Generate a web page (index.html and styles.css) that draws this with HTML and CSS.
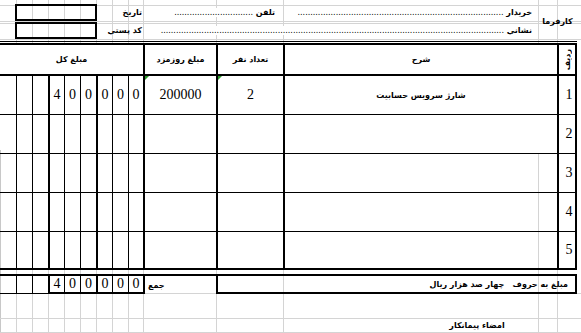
FILE: index.html
```html
<!DOCTYPE html>
<html lang="fa" dir="rtl">
<head>
    <meta charset="UTF-8">
    <meta name="viewport" content="width=device-width, initial-scale=1.0">
    <title>صورت حساب روزمزد</title>
    <link rel="stylesheet" href="styles.css">
</head>
<body>
    <div class="sheet">
        <div class="head">
            <div class="employer">کارفرما</div>
            <div class="field buyer"><span class="ink">خريدار <span class="dots">.................................................................................</span></span></div>
            <div class="field phone"><span class="ink">تلفن <span class="dots">...............................</span></span></div>
            <div class="label">تاريخ</div>
            <div class="box"></div>
            <div class="field address"><span class="ink">نشاني <span class="dots">.......................................................................................................................................</span></span></div>
            <div class="label">کد پستي</div>
            <div class="box"></div>
        </div>

        <div class="rule"></div>

        <div class="grid" id="grid">
            <div class="th thick row-head"><span>رديف</span></div>
            <div class="th thick">شرح</div>
            <div class="th thick">تعداد نفر</div>
            <div class="th thick">مبلغ روزمزد</div>
            <div class="th total-head">مبلغ کل</div>
        </div>

        <div class="total" id="total">
            <div class="words">مبلغ به حروف   چهار صد هزار ريال</div>
            <div class="sum-label">جمع</div>
        </div>

        <div class="sign">
            <div class="sign-text">امضاء پيمانکار</div>
        </div>
    </div>

    <script>
        // border of each column, right to left
        const edges = ['thick', 'thick', 'thick', 'thick', 'thin', 'thin', 'thick', 'thin', 'thin', 'thick', 'thin', 'thin', 'none'];

        const items = [
            { desc: 'شارژ سرويس حسابيت', count: '2', rate: '200000', total: '400000' },
            {}, {}, {}, {}
        ];

        // one digit per cell, units in the rightmost cell
        function digitCells(value) {
            return (value || '').padStart(9, ' ').split('').reverse();
        }

        function buildRows() {
            const grid = document.getElementById('grid');
            items.forEach((item, index) => {
                const values = [String(index + 1), item.desc || '', item.count || '', item.rate || ''].concat(digitCells(item.total));
                values.forEach((value, col) => {
                    const cell = document.createElement('div');
                    cell.className = 'cell ' + edges[col];
                    if (col === 0) cell.classList.add('num');
                    if (col === 1) cell.classList.add(index < 2 ? 'desc' : 'desc-open');
                    if (col === 2 || col === 3) {
                        cell.classList.add('val');
                        if (value) cell.classList.add('flag');
                    }
                    if (col > 3) cell.classList.add('digit');
                    cell.textContent = value.trim();
                    grid.appendChild(cell);
                });
            });
        }

        function buildTotal() {
            const total = document.getElementById('total');
            digitCells('400000').forEach((value, col) => {
                const cell = document.createElement('div');
                cell.className = 'sum-digit ' + edges[col + 4] + (col < 6 ? ' boxed' : '');
                cell.textContent = value.trim();
                total.appendChild(cell);
            });
        }

        window.onload = function() {
            buildRows();
            buildTotal();
        };
    </script>
</body>
</html>
```

FILE: styles.css
```css
body {
    margin: 0;
    background-color: #ffffff;
    font-family: "DejaVu Sans", sans-serif;
    font-size: 8px;
    font-weight: bold;
    color: #000000;
}

.sheet {
    width: 577px;
    height: 333px;
    padding-right: 4px;
    overflow: hidden;
    /* spreadsheet gridlines */
    background-image:
        repeating-linear-gradient(to right, #d4d4d4 0 1px, transparent 1px 16px),
        linear-gradient(#d4d4d4, #d4d4d4),
        linear-gradient(#d4d4d4, #d4d4d4),
        linear-gradient(#d4d4d4, #d4d4d4),
        linear-gradient(#d4d4d4, #d4d4d4),
        linear-gradient(#d4d4d4, #d4d4d4),
        linear-gradient(#d4d4d4, #d4d4d4),
        linear-gradient(#d4d4d4, #d4d4d4),
        linear-gradient(#d4d4d4, #d4d4d4),
        linear-gradient(#d4d4d4, #d4d4d4),
        linear-gradient(#d4d4d4, #d4d4d4),
        linear-gradient(#d4d4d4, #d4d4d4),
        linear-gradient(#d4d4d4, #d4d4d4),
        linear-gradient(#c8c8c8, #c8c8c8);
    background-position:
        16px 0, 143px 0, 216px 0, 283px 0, 538px 0, 557px 0,
        0 5px, 0 21px, 0 23px, 0 39px, 0 293px, 0 318px, 0 332px,
        0 150px;
    background-size:
        113px 100%, 1px 100%, 1px 100%, 1px 100%, 1px 100%, 1px 100%,
        100% 1px, 100% 1px, 100% 1px, 100% 1px, 100% 1px, 100% 1px, 100% 1px,
        1px 100%;
    background-repeat: no-repeat;
}

/* customer details */

.head {
    display: grid;
    grid-template-columns: 39px 255px 140px 46px 82px 15px;
    grid-template-rows: 17px 17px;
    row-gap: 1px;
    padding: 4px 0 2px;
}

.head > div {
    display: flex;
    align-items: center;
}

.employer {
    grid-row: span 2;
    justify-content: center;
}

.field {
    justify-content: flex-start;
}

.buyer {
    padding-right: 6px;
}

.phone {
    padding-right: 8px;
}

.address {
    grid-column: 2 / span 2;
    padding-right: 6px;
}

.ink {
    background-color: #ffffff;
    white-space: nowrap;
}

.dots {
    font-weight: normal;
}

.label {
    padding-right: 1px;
}

.box {
    border: 2px solid #000000;
}

.rule {
    width: 577px;
    height: 1px;
    border-top: 1px solid #000000;
    border-bottom: 2px solid #000000;
}

/* items table */

.grid {
    display: grid;
    grid-template-columns: 18px 274px 67px 73px 15px repeat(8, 16px);
    grid-template-rows: 31px repeat(4, 39px) 36px;
    width: 577px;
    box-sizing: border-box;
    border-right: 2px solid #000000;
    border-bottom: 2px solid #000000;
}

.th, .cell {
    display: flex;
    align-items: center;
    justify-content: center;
    box-sizing: border-box;
    position: relative;
    border-bottom: 1px solid #000000;
}

.th {
    background-color: #ffffff;
    border-bottom-width: 2px;
}

.total-head {
    grid-column: span 9;
}

.row-head span {
    writing-mode: vertical-rl;
    transform: rotate(180deg);
}

.thick {
    border-left: 2px solid #000000;
}

.thin {
    border-left: 1px solid #000000;
}

.grid .cell:nth-last-child(-n+13) {
    border-bottom: none;
}

.desc {
    background-color: #ffffff;
}

.num, .val, .digit, .sum-digit {
    font-family: "Liberation Serif", serif;
    font-size: 14px;
    font-weight: normal;
}

.num {
    padding-left: 4px;
}

/* green marker for numbers stored as text */
.flag::before {
    content: "";
    position: absolute;
    top: 0;
    left: 0;
    border-top: 4px solid #2b9a2b;
    border-right: 4px solid transparent;
}

/* totals row */

.total {
    display: grid;
    grid-template-columns: 361px 73px 15px repeat(8, 16px);
    grid-template-rows: 20px;
    width: 577px;
    margin-top: 4px;
}

.total > div {
    display: flex;
    align-items: center;
    box-sizing: border-box;
    border-top: 2px solid #000000;
}

.words {
    border: 2px solid #000000;
    padding-right: 7px;
    white-space: pre;
}

.sum-label {
    border-left: 2px solid #000000;
    justify-content: flex-end;
    padding-left: 3px;
}

.sum-digit {
    justify-content: center;
    border-bottom: 1px solid #000000;
}

.sum-digit.boxed {
    border-bottom-width: 2px;
}

/* signature */

.sign {
    display: grid;
    grid-template-columns: 39px 122px;
    margin-top: 25px;
    line-height: 13px;
}

.sign-text {
    grid-column: 2;
    text-align: center;
}
```
